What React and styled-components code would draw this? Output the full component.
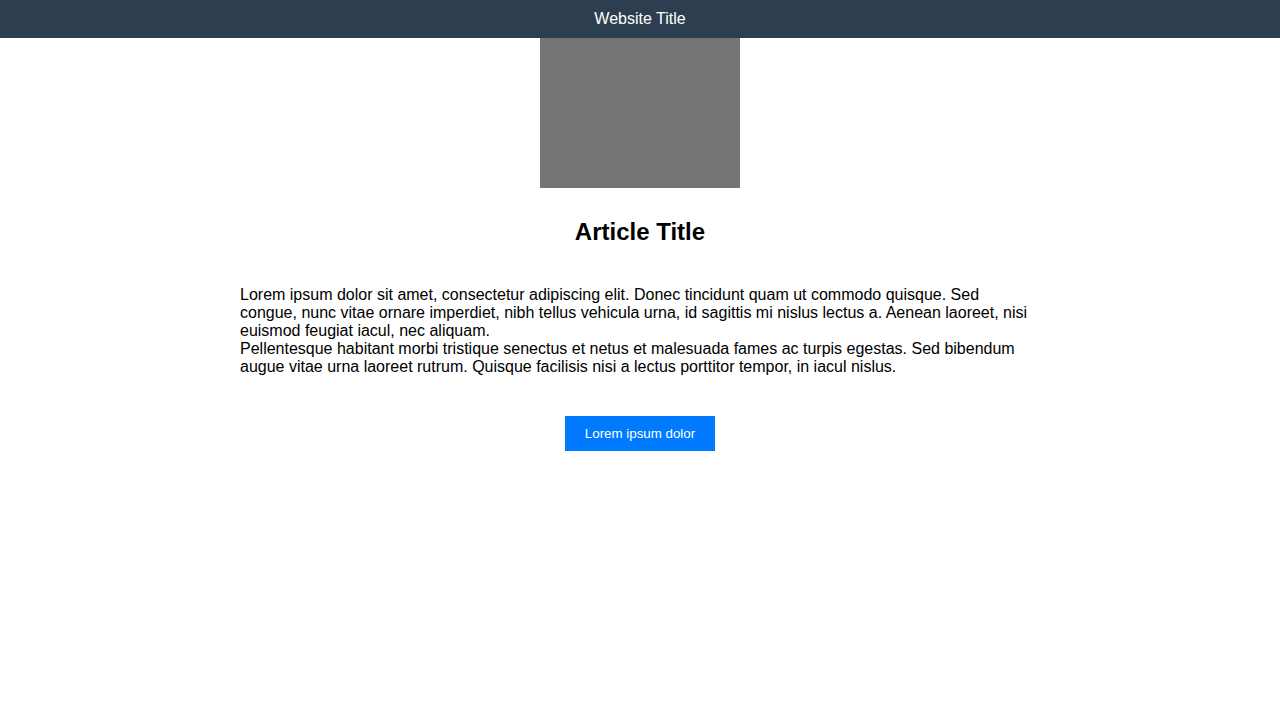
import React from "react";
import styled, { createGlobalStyle } from "styled-components";

const Global = createGlobalStyle`
  html, body { margin: 0; padding: 0; background: #fff; }
  body { font-family: "Liberation Sans", Arial, sans-serif; color: #000; }
`;

const Header = styled.header`
  background: #2c3e50;
  color: #fff;
  text-align: center;
  padding: 10px 0;
  font-size: 16px;
  line-height: 18px;
`;

const Main = styled.main`
  display: flex;
  flex-direction: column;
  align-items: center;
`;

const Picture = styled.div`
  width: 200px;
  height: 150px;
  background: #757575;
`;

const Title = styled.h2`
  font-size: 24px;
  font-weight: bold;
  line-height: 28px;
  margin: 30px 0 40px;
`;

const Body = styled.p`
  width: 800px;
  margin: 0 0 40px;
  font-size: 16px;
  line-height: 18px;
`;

const Button = styled.button`
  font-family: "Liberation Sans", Arial, sans-serif;
  font-size: 13.333px;
  line-height: 15px;
  white-space: nowrap;
  background: #007bff;
  color: #fff;
  border: none;
  padding: 10px 20px;
  cursor: pointer;
`;

export default function App() {
  return (
    <>
      <Global />
      <Header>Website Title</Header>
      <Main>
        <Picture />
        <Title>Article Title</Title>
        <Body>
          Lorem ipsum dolor sit amet, consectetur adipiscing elit. Donec tincidunt quam ut commodo quisque. Sed congue, nunc vitae ornare imperdiet, nibh tellus vehicula urna, id sagittis mi nislus lectus a. Aenean laoreet, nisi euismod feugiat iacul, nec aliquam.
          <br />
          Pellentesque habitant morbi tristique senectus et netus et malesuada fames ac turpis egestas. Sed bibendum augue vitae urna laoreet rutrum. Quisque facilisis nisi a lectus porttitor tempor, in iacul nislus.
        </Body>
        <Button>Lorem ipsum dolor</Button>
      </Main>
    </>
  );
}
